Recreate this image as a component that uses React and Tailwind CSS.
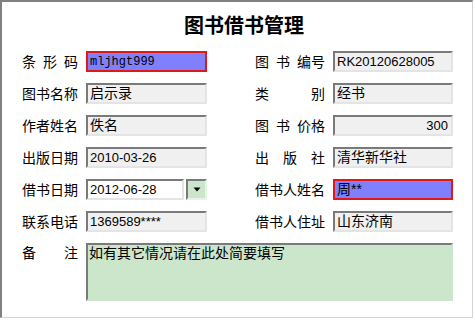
import React from "react";

const cjk = "font-['Liberation_Sans','Noto_Sans_CJK_SC',sans-serif]";

function Label({ parts, width }) {
  return (
    <div
      className={`flex justify-between shrink-0 text-[14px] leading-[16px] text-black ${cjk} ${width}`}
    >
      {parts.map((p, i) => (
        <span key={i}>{p}</span>
      ))}
    </div>
  );
}

function Field({ value, width, tone = "gray", align = "left", kind = "cjk" }) {
  const tones = {
    gray: "bg-[#f0f0f0] border-t-[#7a7a7a] border-l-[#7a7a7a] border-r-[#e4e4e4] border-b-[#e4e4e4]",
    white: "bg-white border-t-[#7a7a7a] border-l-[#7a7a7a] border-r-[#e4e4e4] border-b-[#e4e4e4]",
    blue: "bg-[#8080ff] border-[#e01818]",
  };
  const fonts = {
    cjk: `${cjk} text-[14px]`,
    latin: `${cjk} text-[13px]`,
    mono: "font-['Liberation_Mono',monospace] text-[12px]",
  };
  return (
    <div
      className={`h-[21px] shrink-0 border-2 flex items-center px-[2px] overflow-hidden whitespace-nowrap text-black ${
        tones[tone]
      } ${width} ${align === "right" ? "justify-end pr-[3px]" : ""} ${fonts[kind]}`}
    >
      {value}
    </div>
  );
}

function Row({ left, right }) {
  return (
    <div className="flex items-center h-[21px]">
      <div className="flex items-center gap-[8px] w-[185px]">{left}</div>
      <div className="flex items-center gap-[8px] ml-[48px]">{right}</div>
    </div>
  );
}

export default function App() {
  return (
    <div className="w-[475px] h-[320px] bg-white">
      <div className="w-[473px] h-[318px] border-t-2 border-l-2 border-[#808080] border-r border-r-[#d4d4d4] border-b border-b-[#d4d4d4] flex flex-col pl-[20px]">
        <div className="mt-[11px] h-[24px] flex justify-center pr-[6px]">
          <span className="text-[20px] leading-[24px] font-bold text-black font-['Noto_Sans_CJK_SC',sans-serif]">
            图书借书管理
          </span>
        </div>

        <div className="mt-[14px] flex flex-col gap-[11px]">
          <Row
            left={
              <>
                <Label parts={["条", "形", "码"]} width="w-[56px]" />
                <Field value="mljhgt999" width="w-[121px]" tone="blue" kind="mono" />
              </>
            }
            right={
              <>
                <Label parts={["图", "书", "编号"]} width="w-[70px]" />
                <Field value="RK20120628005" width="w-[120px]" kind="latin" />
              </>
            }
          />
          <Row
            left={
              <>
                <Label parts={["图书名称"]} width="w-[56px]" />
                <Field value="启示录" width="w-[121px]" />
              </>
            }
            right={
              <>
                <Label parts={["类", "别"]} width="w-[70px]" />
                <Field value="经书" width="w-[120px]" />
              </>
            }
          />
          <Row
            left={
              <>
                <Label parts={["作者姓名"]} width="w-[56px]" />
                <Field value="佚名" width="w-[121px]" />
              </>
            }
            right={
              <>
                <Label parts={["图", "书", "价格"]} width="w-[70px]" />
                <Field value="300" width="w-[120px]" align="right" kind="latin" />
              </>
            }
          />
          <Row
            left={
              <>
                <Label parts={["出版日期"]} width="w-[56px]" />
                <Field value="2010-03-26" width="w-[121px]" kind="latin" />
              </>
            }
            right={
              <>
                <Label parts={["出", "版", "社"]} width="w-[70px]" />
                <Field value="清华新华社" width="w-[120px]" />
              </>
            }
          />
          <Row
            left={
              <>
                <Label parts={["借书日期"]} width="w-[56px]" />
                <div className="flex gap-[2px]">
                  <Field value="2012-06-28" width="w-[98px]" tone="white" kind="latin" />
                  <div className="w-[21px] h-[21px] bg-[#cce6cc] border-2 border-t-[#7a7a7a] border-l-[#7a7a7a] border-r-[#e8f2e8] border-b-[#e8f2e8] flex items-center justify-center">
                    <svg width="8" height="5" viewBox="0 0 8 5">
                      <path d="M0.5 0.5 H7.5 L4 4.5 Z" fill="#000" />
                    </svg>
                  </div>
                </div>
              </>
            }
            right={
              <>
                <Label parts={["借书人姓名"]} width="w-[70px]" />
                <Field value="周**" width="w-[120px]" tone="blue" />
              </>
            }
          />
          <Row
            left={
              <>
                <Label parts={["联系电话"]} width="w-[56px]" />
                <Field value="1369589****" width="w-[121px]" kind="latin" />
              </>
            }
            right={
              <>
                <Label parts={["借书人住址"]} width="w-[70px]" />
                <Field value="山东济南" width="w-[120px]" />
              </>
            }
          />
          <div className="flex items-start gap-[8px]">
            <div className="pt-[2px]">
              <Label parts={["备", "注"]} width="w-[56px]" />
            </div>
            <div
              className={`w-[367px] h-[58px] bg-[#cce6cc] border-2 border-t-[#7a7a7a] border-l-[#7a7a7a] border-r-[#cce6cc] border-b-[#cce6cc] px-[1px] text-[14px] leading-[16px] ${cjk}`}
            >
              如有其它情况请在此处简要填写
            </div>
          </div>
        </div>
      </div>
    </div>
  );
}
